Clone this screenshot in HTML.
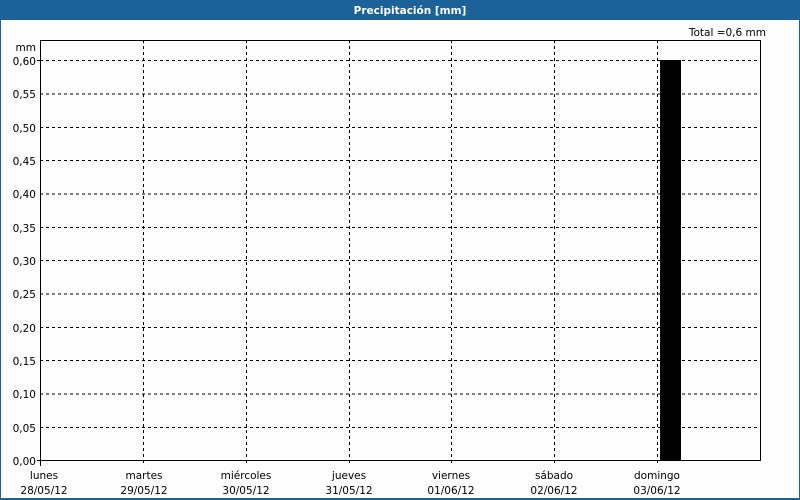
<!DOCTYPE html>
<html><head><meta charset="utf-8"><style>
body{margin:0;width:800px;height:500px;overflow:hidden;background:#fff}
svg{display:block}
text{font-family:"DejaVu Sans","Liberation Sans",sans-serif;font-size:10.5px;fill:#000}
</style></head><body>
<svg width="800" height="500" xmlns="http://www.w3.org/2000/svg">
<rect x="0" y="0" width="800" height="500" fill="#1c6198"/>
<rect x="1" y="20" width="798" height="478" fill="#fdfdfd"/>
<text x="410" y="14" text-anchor="middle" style="fill:#fff;font-weight:bold;font-size:10.5px">Precipitación [mm]</text>
<text x="766" y="36" text-anchor="end">Total =0,6 mm</text>
<text x="36" y="51" text-anchor="end">mm</text>
<g stroke="#000" stroke-width="1" stroke-dasharray="3,3" shape-rendering="crispEdges">
<line x1="40" y1="60.5" x2="760" y2="60.5"/>
<line x1="40" y1="94" x2="760" y2="94"/>
<line x1="40" y1="127.5" x2="760" y2="127.5"/>
<line x1="40" y1="160.5" x2="760" y2="160.5"/>
<line x1="40" y1="194" x2="760" y2="194"/>
<line x1="40" y1="227.5" x2="760" y2="227.5"/>
<line x1="40" y1="260.5" x2="760" y2="260.5"/>
<line x1="40" y1="294" x2="760" y2="294"/>
<line x1="40" y1="327.5" x2="760" y2="327.5"/>
<line x1="40" y1="360.5" x2="760" y2="360.5"/>
<line x1="40" y1="394" x2="760" y2="394"/>
<line x1="40" y1="427.5" x2="760" y2="427.5"/>
<line x1="143.5" y1="40" x2="143.5" y2="466"/>
<line x1="246.5" y1="40" x2="246.5" y2="466"/>
<line x1="349.5" y1="40" x2="349.5" y2="466"/>
<line x1="451.5" y1="40" x2="451.5" y2="466"/>
<line x1="554.5" y1="40" x2="554.5" y2="466"/>
<line x1="657.5" y1="40" x2="657.5" y2="466"/>
</g>
<rect x="660" y="60" width="21" height="400" fill="#000"/>
<rect x="40.5" y="40.5" width="720" height="420" fill="none" stroke="#000" shape-rendering="crispEdges"/>
<g stroke="#000" shape-rendering="crispEdges">
<line x1="37" y1="60.5" x2="40" y2="60.5"/><line x1="37" y1="460.5" x2="40" y2="460.5"/>
<line x1="40.5" y1="460" x2="40.5" y2="466"/>
</g>
<g text-anchor="end">
<text x="36" y="65">0,60</text><text x="36" y="98">0,55</text><text x="36" y="132">0,50</text>
<text x="36" y="165">0,45</text><text x="36" y="198">0,40</text><text x="36" y="232">0,35</text>
<text x="36" y="265">0,30</text><text x="36" y="298">0,25</text><text x="36" y="332">0,20</text>
<text x="36" y="365">0,15</text><text x="36" y="398">0,10</text><text x="36" y="432">0,05</text>
<text x="36" y="465">0,00</text>
</g>
<g text-anchor="middle">
<text x="44" y="479">lunes</text><text x="44" y="494">28/05/12</text>
<text x="144" y="479">martes</text><text x="144" y="494">29/05/12</text>
<text x="246" y="479">miércoles</text><text x="246" y="494">30/05/12</text>
<text x="349" y="479">jueves</text><text x="349" y="494">31/05/12</text>
<text x="451" y="479">viernes</text><text x="451" y="494">01/06/12</text>
<text x="554" y="479">sábado</text><text x="554" y="494">02/06/12</text>
<text x="657" y="479">domingo</text><text x="657" y="494">03/06/12</text>
</g>
</svg>
</body></html>
